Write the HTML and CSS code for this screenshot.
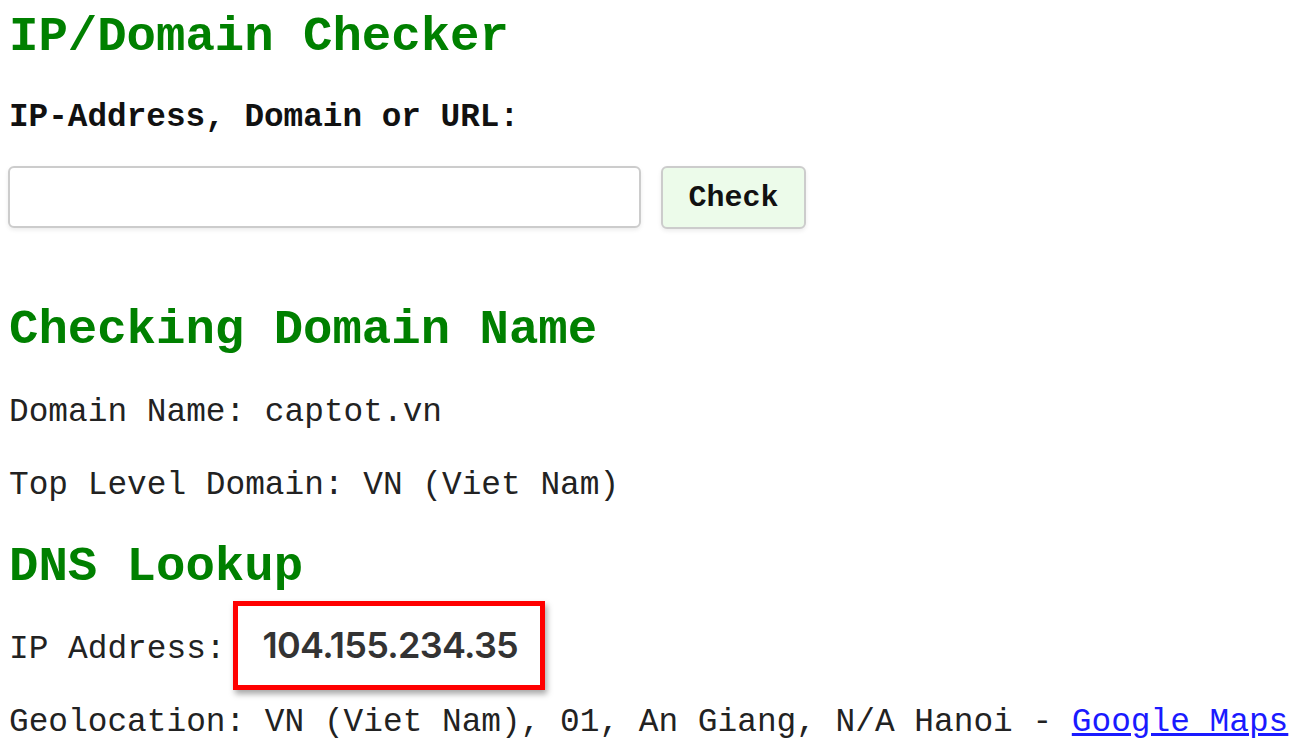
FILE: index.html
```html
<!DOCTYPE html>
<html>
<head>
<meta charset="utf-8">
<title>IP/Domain Checker</title>
<link rel="stylesheet" href="styles.css">
</head>
<body>
<main class="page">
  <h1 class="title">IP/Domain Checker</h1>
  <form class="check-form">
    <label class="field-label" for="q">IP-Address, Domain or URL:</label>
    <div class="field-row">
      <input class="field-input" id="q" type="text">
      <button class="check-btn" type="button">Check</button>
    </div>
  </form>
  <h2 class="section-title section-first">Checking Domain Name</h2>
  <p class="info">Domain Name: captot.vn</p>
  <p class="info">Top Level Domain: VN (Viet Nam)</p>
  <h2 class="section-title">DNS Lookup</h2>
  <p class="info">IP Address:<span class="ip-box">104.155.234.35</span></p>
  <p class="info">Geolocation: VN (Viet Nam), 01, An Giang, N/A Hanoi - <a class="map-link" href="#">Google Maps</a></p>
</main>
</body>
</html>
```

FILE: styles.css
```css
html, body {
  margin: 0;
  padding: 0;
  background: #ffffff;
}
body {
  font-family: "Courier New", "Nimbus Mono PS", "FreeMono", "Liberation Mono", monospace;
  color: #222222;
  overflow: hidden;
}
.page {
  padding: 9px 0 0 9px;
}
.title,
.section-title {
  font-family: "Courier New", "Nimbus Mono PS", "FreeMono", "Liberation Mono", monospace;
  font-weight: bold;
  font-size: 49px;
  line-height: 56px;
  color: #008000;
  margin: 0;
}
.check-form {
  margin: 34px 0 0 0;
}
.field-label {
  display: block;
  font-weight: bold;
  font-size: 32.7px;
  line-height: 37px;
  color: #111111;
}
.field-row {
  display: flex;
  align-items: flex-start;
  gap: 20px;
  margin-top: 30px;
}
.field-input {
  box-sizing: border-box;
  width: 633px;
  height: 62px;
  margin: 0 0 0 -1px;
  border: 2px solid #cccccc;
  border-radius: 6px;
  background: #ffffff;
  box-shadow: 0 2px 4px rgba(0,0,0,0.08);
  font-family: "Courier New", "Liberation Mono", monospace;
  font-size: 28px;
  padding: 0 12px;
}
.check-btn {
  box-sizing: border-box;
  width: 145px;
  height: 63px;
  border: 2px solid #cccccc;
  border-radius: 6px;
  background: #ecfbea;
  box-shadow: 0 2px 4px rgba(0,0,0,0.08);
  font-family: "Courier New", "Liberation Mono", monospace;
  font-weight: bold;
  font-size: 30px;
  color: #111111;
  padding: 0;
}
.section-title.section-first {
  margin-top: 73px;
}
.info {
  font-size: 32.8px;
  line-height: 37px;
  margin: 36px 0;
  white-space: nowrap;
}
.info + .section-title {
  margin-top: -1px;
}
.ip-box {
  display: inline-block;
  box-sizing: border-box;
  vertical-align: middle;
  margin: -30px 0 -22px 7px;
  height: 89px;
  width: 312px;
  padding: 0 0 0 25px;
  border: 5px solid #ff0000;
  background: #ffffff;
  box-shadow: 2px 4px 6px rgba(0,0,0,0.35);
  font-family: "Inter", "Open Sans", sans-serif;
  font-weight: 600;
  font-size: 36px;
  letter-spacing: -0.7px;
  line-height: 79px;
  color: #333333;
}
.map-link {
  color: #1a1aff;
  text-decoration: underline;
}
```
